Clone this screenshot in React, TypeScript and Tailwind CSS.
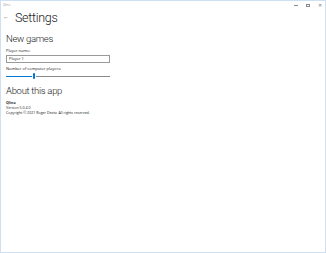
import React from 'react';

const font = { fontFamily: '"Open Sans", "Noto Sans", sans-serif' };
const light = { fontFamily: 'Roboto, "Open Sans", sans-serif' };

export default function App() {
    return (
        <div className="w-[326px] h-[253px] bg-white border border-[#cfe0f2] flex flex-col text-[#1a1a1a]" style={font}>
            <div className="h-[9px] flex items-center justify-between pl-[2px] pr-[3px]">
                <span className="text-[3px] text-[#9a9a9a]">Qlino</span>
                <div className="flex items-center gap-[8px]">
                    <div className="w-[4px] h-px bg-[#888]" />
                    <div className="w-[4px] h-[3px] border border-[#888]" />
                    <span className="text-[5px] leading-none text-[#777]">✕</span>
                </div>
            </div>
            <div className="flex items-center gap-[6px] pl-[2px]">
                <span className="text-[6px] text-[#555] -mt-[1px]">←</span>
                <h1 className="text-[12.5px] font-light leading-[16px] tracking-[-0.3px] text-[#222]" style={light}>Settings</h1>
            </div>
            <div className="pl-[5px] mt-[7px] flex flex-col">
                <h2 className="text-[9.5px] font-light leading-[12px] tracking-[-0.3px] text-[#222]" style={light}>New games</h2>
                <span className="text-[4px] leading-[5px] mt-[3px]">Player name:</span>
                <div className="w-[104px] h-[8px] mt-[2px] border border-[#9a9a9a] flex items-center pl-[2px] text-[4px]">Player 1</div>
                <span className="text-[4px] leading-[5px] mt-[3px]">Number of computer players:</span>
                <div className="w-[104px] h-[8px] flex items-center mt-[1px]">
                    <div className="w-[26px] h-px bg-[#0078d7]" />
                    <div className="w-[2px] h-[6px] rounded-[1px] bg-[#0078d7] mx-px" />
                    <div className="flex-1 h-px bg-[#8a8a8a]" />
                </div>
                <h2 className="text-[9.5px] font-light leading-[12px] tracking-[-0.3px] mt-[5px] text-[#222]" style={light}>About this app</h2>
                <span className="text-[3.6px] leading-[5px] font-bold mt-[3px]">Qlino</span>
                <span className="text-[3.6px] leading-[5px]">Version 5.0.4.0</span>
                <span className="text-[3.6px] leading-[5px]">Copyright © 2021 Roger Deetz. All rights reserved.</span>
            </div>
        </div>
    );
}
